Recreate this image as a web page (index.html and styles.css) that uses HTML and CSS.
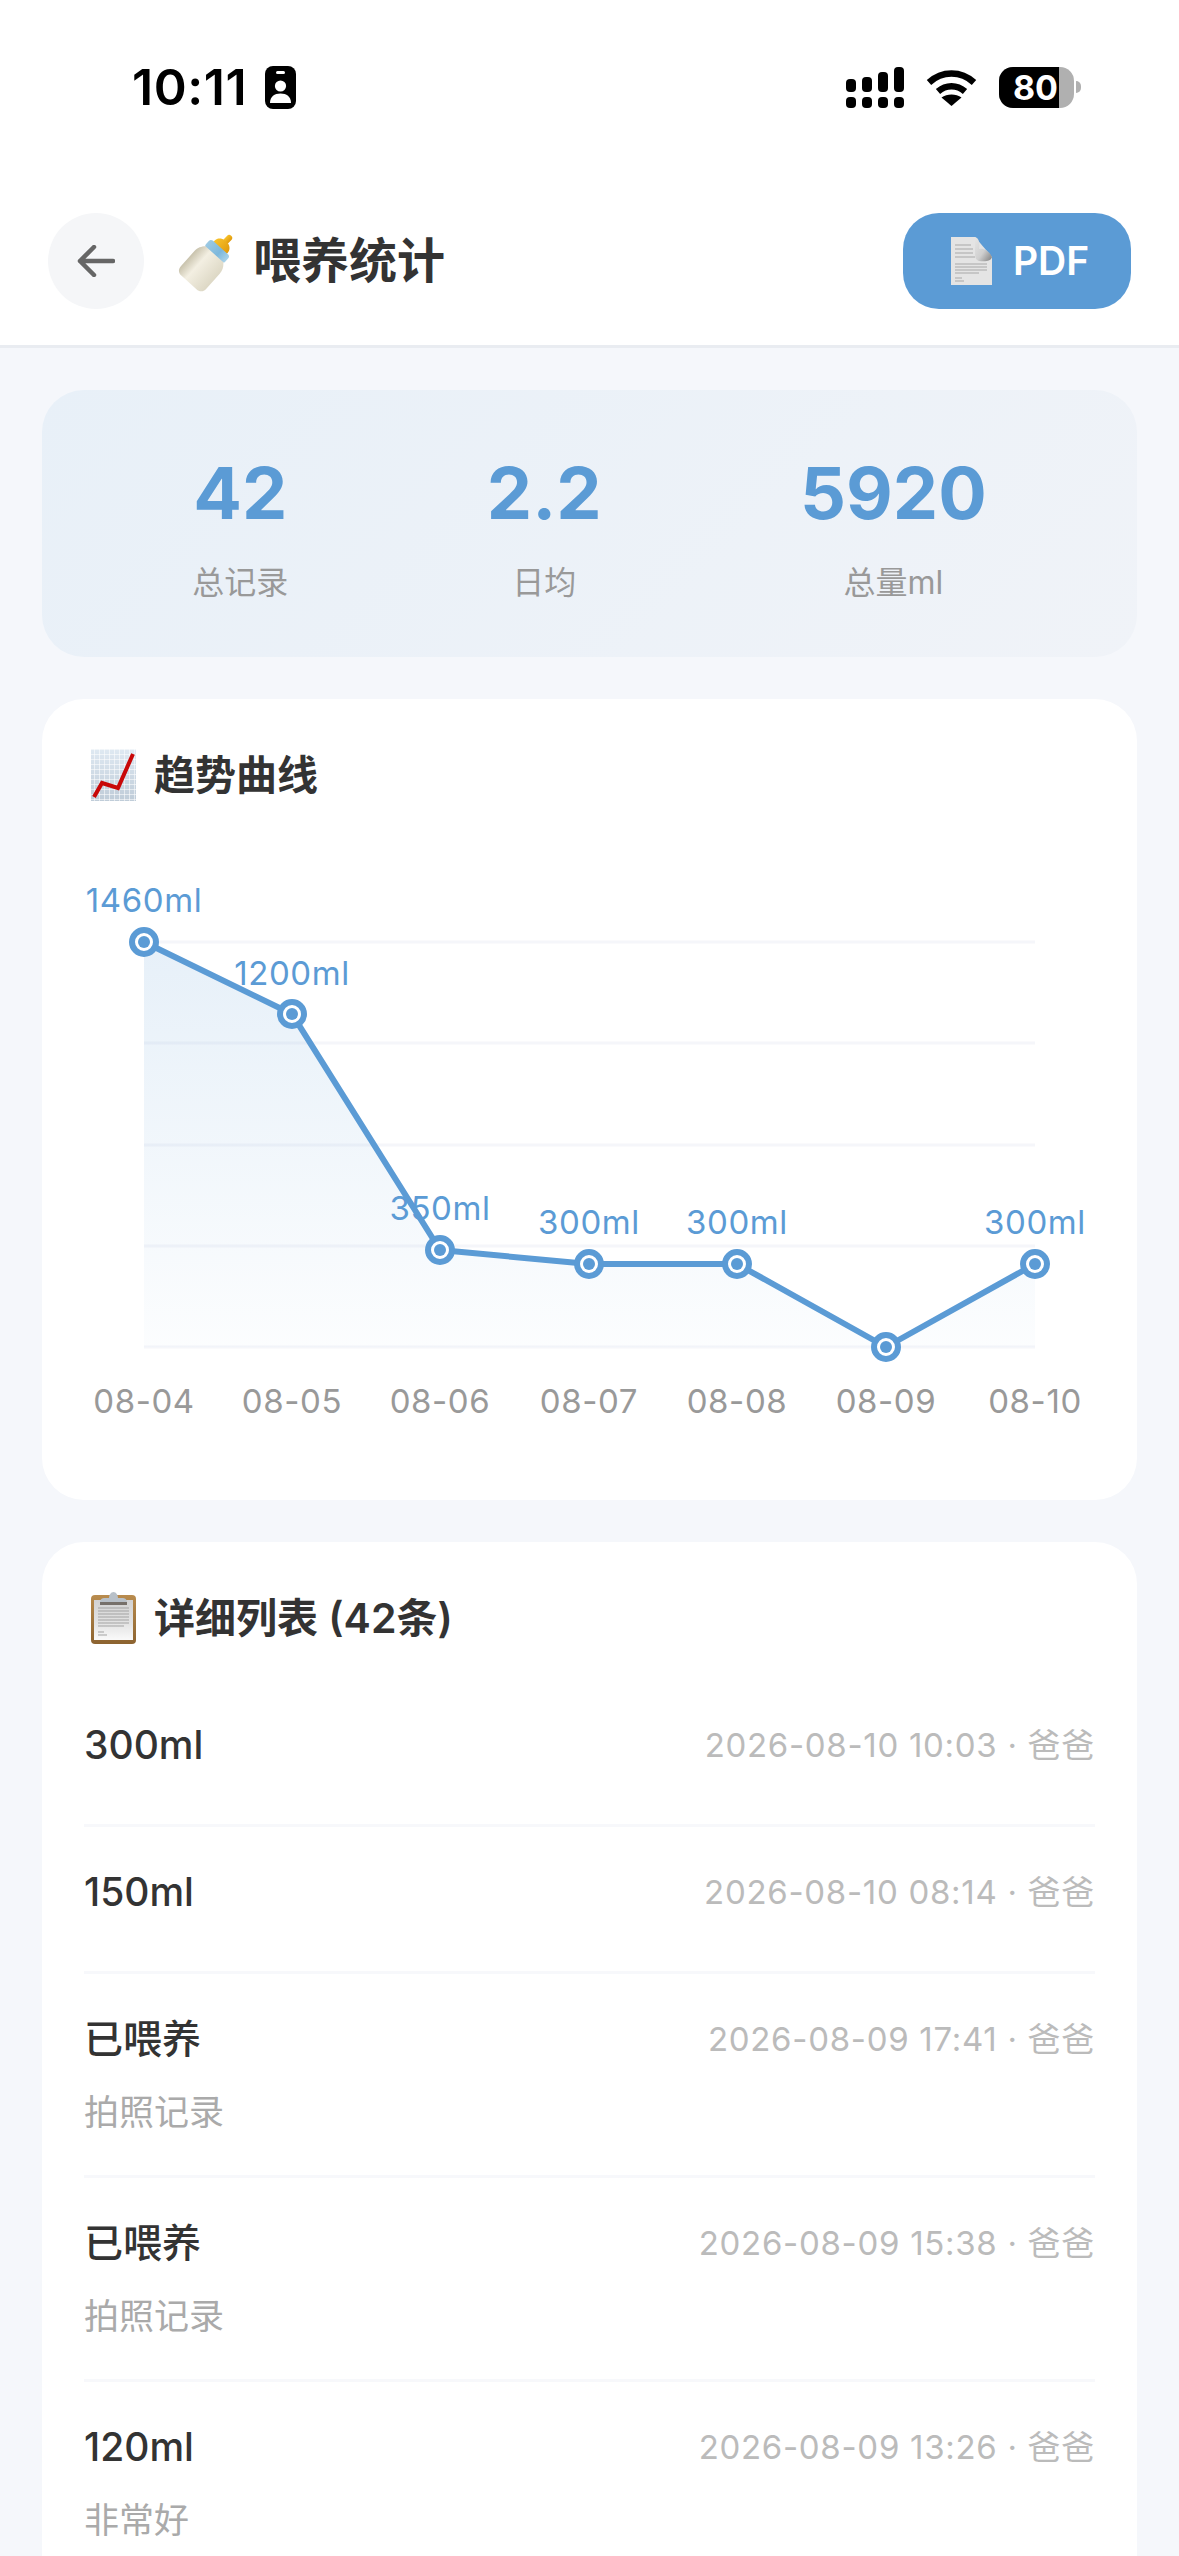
FILE: index.html
```html
<!DOCTYPE html>
<html lang="zh-CN">
<head>
<meta charset="utf-8">
<title>喂养统计</title>
<link rel="stylesheet" href="styles.css">
</head>
<body>
<header class="top">
  <div class="status">
    <div class="status-left">
      <span class="clock">10:11</span>
      <svg class="id-icon" viewBox="0 0 31 43"><rect width="31" height="43" rx="8" fill="#000"/><rect x="11" y="5" width="9" height="3" rx="1.5" fill="#fff"/><circle cx="15.5" cy="20" r="5.6" fill="#fff"/><path d="M5 37c0-6.5 4.5-9.5 10.500-9.500S26 30.500 26 37z" fill="#fff"/></svg>
    </div>
    <div class="status-right">
      <svg class="signal" viewBox="0 0 58 41"><g fill="#000"><rect x="0" y="12" width="10" height="13" rx="4"/><rect x="16" y="10" width="10" height="15" rx="4"/><rect x="32" y="5" width="10" height="20" rx="4"/><rect x="48" y="0" width="10" height="25" rx="4"/><rect x="0" y="30" width="10" height="11" rx="4"/><rect x="16" y="30" width="10" height="11" rx="4"/><rect x="32" y="30" width="10" height="11" rx="4"/><rect x="48" y="30" width="10" height="11" rx="4"/></g></svg>
      <svg class="wifi" viewBox="0 0 51 37"><path d="M3 13.500C16 1.500 35 1.500 48 13.500" fill="none" stroke="#000" stroke-width="6.500"/><path d="M12 22.500C20 15.500 31 15.500 39 22.500" fill="none" stroke="#000" stroke-width="6.500"/><path d="M25.500 37L15.500 28.500C21 24.500 30 24.500 35.500 28.500z" fill="#000"/></svg>
      <div class="battery">
        <div class="battery-body"><div class="battery-level">80</div></div>
        <div class="battery-nub"></div>
      </div>
    </div>
  </div>
  <nav class="nav">
    <div class="nav-left">
      <button class="back" type="button" aria-label="返回">
        <svg viewBox="0 0 38 32" class="back-icon"><path d="M36 16H3M17 2L3 16l14 14" fill="none" stroke="#666" stroke-width="4.500" stroke-linecap="round" stroke-linejoin="round"/></svg>
      </button>
      <svg class="bottle" viewBox="0 0 58 58">
        <defs>
          <linearGradient id="bo1" x1="0" y1="0" x2="1" y2="0"><stop offset="0" stop-color="#c8c2ac"/><stop offset=".35" stop-color="#f3efe2"/><stop offset="1" stop-color="#ddd8c5"/></linearGradient>
          <linearGradient id="bo2" x1="0" y1="0" x2="1" y2="0"><stop offset="0" stop-color="#9cc9e3"/><stop offset=".6" stop-color="#7db8dc"/><stop offset="1" stop-color="#a9d3ea"/></linearGradient>
          <linearGradient id="bo3" x1="0" y1="0" x2="1" y2="0"><stop offset="0" stop-color="#f8c22b"/><stop offset="1" stop-color="#e09a0c"/></linearGradient>
        </defs>
        <g transform="rotate(42 29 29)">
          <rect x="27" y="-6" width="6" height="10" rx="3" fill="url(#bo3)"/>
          <path d="M21 9c0-5 5-7 6-7h6c1 0 6 2 6 7v3H21z" fill="url(#bo3)"/>
          <rect x="17" y="10" width="26" height="10" rx="3" fill="url(#bo2)"/>
          <path d="M18 19h24c3 3 5 6 5 11v20c0 5-3 7-7 7H20c-4 0-7-2-7-7V30c0-5 2-8 5-11z" fill="url(#bo1)"/>
        </g>
      </svg>
      <h1 class="title">喂养统计</h1>
    </div>
    <button class="pdf" type="button">
      <svg class="doc" viewBox="0 0 41 48">
        <defs><linearGradient id="curl" x1="0" y1="0" x2="1" y2="1"><stop offset="0" stop-color="#e6e6e6"/><stop offset=".55" stop-color="#cfcfcf"/><stop offset="1" stop-color="#7d7d7d"/></linearGradient></defs>
        <path d="M0 0h24l17 20v28H0z" fill="#e4e4e4"/>
        <path d="M24 0c4 1 5 6 4 12 5-1 10 2 13 8-1 4-6 5-13 4-4-1-4-6-4-10z" fill="url(#curl)"/>
        <path d="M4 8h16M4 12h18M4 16h18M4 20h20M4 27h32M4 30h32M4 33h32M4 36h24M4 41h7M4 44h9" stroke="#a8a8a8" stroke-width="1" fill="none"/>
      </svg>
      <span>PDF</span>
    </button>
  </nav>
</header>

<main class="content">
  <section class="stats">
    <div class="stat"><div class="stat-num">42</div><div class="stat-label">总记录</div></div>
    <div class="stat"><div class="stat-num">2.2</div><div class="stat-label">日均</div></div>
    <div class="stat"><div class="stat-num">5920</div><div class="stat-label">总量ml</div></div>
  </section>

  <section class="card">
    <h2 class="card-title">
      <svg class="emoji" viewBox="0 0 58 52">
        <defs>
          <linearGradient id="cg" x1="0" y1="0" x2="0" y2="1"><stop offset="0" stop-color="#dfe9f2"/><stop offset="1" stop-color="#bfccd8"/></linearGradient>
          <pattern id="cp" width="5" height="5" patternUnits="userSpaceOnUse"><path d="M0 .5H5M.5 0V5" stroke="#fff" stroke-opacity=".55" stroke-width="1"/></pattern>
        </defs>
        <rect x="7" y="0" width="45" height="52" fill="url(#cg)"/>
        <rect x="7" y="0" width="45" height="52" fill="url(#cp)"/>
        <path d="M10 48L18 34 34 39 49 5" fill="none" stroke="#c80808" stroke-width="4"/>
      </svg>
      <span>趋势曲线</span>
    </h2>
    <svg class="chart" viewBox="84 860 1011 598">
      <defs><linearGradient id="area" x1="0" y1="0" x2="0" y2="1"><stop offset="0" stop-color="#5b9bd5" stop-opacity=".15"/><stop offset="1" stop-color="#5b9bd5" stop-opacity=".02"/></linearGradient></defs>
      <g class="grid">
        <line x1="144" x2="1035" y1="942" y2="942"/>
        <line x1="144" x2="1035" y1="1043" y2="1043"/>
        <line x1="144" x2="1035" y1="1145" y2="1145"/>
        <line x1="144" x2="1035" y1="1246" y2="1246"/>
        <line x1="144" x2="1035" y1="1347" y2="1347"/>
      </g>
      <polygon points="144,942 292,1014 440,1250 589,1264 737,1264 886,1347 1035,1264 1035,1347 144,1347" fill="url(#area)"/>
      <polyline class="trend" points="144,942 292,1014 440,1250 589,1264 737,1264 886,1347 1035,1264"/>
      <g class="pt-ring">
        <circle cx="144" cy="942" r="12"/><circle cx="292" cy="1014" r="12"/><circle cx="440" cy="1250" r="12"/><circle cx="589" cy="1264" r="12"/><circle cx="737" cy="1264" r="12"/><circle cx="886" cy="1347" r="12"/><circle cx="1035" cy="1264" r="12"/>
      </g>
      <g class="pt-dot">
        <circle cx="144" cy="942" r="6"/><circle cx="292" cy="1014" r="6"/><circle cx="440" cy="1250" r="6"/><circle cx="589" cy="1264" r="6"/><circle cx="737" cy="1264" r="6"/><circle cx="886" cy="1347" r="6"/><circle cx="1035" cy="1264" r="6"/>
      </g>
      <g class="val">
        <text x="144" y="912">1460ml</text>
        <text x="292" y="985">1200ml</text>
        <text x="440" y="1220">350ml</text>
        <text x="589" y="1234">300ml</text>
        <text x="737" y="1234">300ml</text>
        <text x="1035" y="1234">300ml</text>
      </g>
      <g class="axis">
        <text x="144" y="1413">08-04</text>
        <text x="292" y="1413">08-05</text>
        <text x="440" y="1413">08-06</text>
        <text x="589" y="1413">08-07</text>
        <text x="737" y="1413">08-08</text>
        <text x="886" y="1413">08-09</text>
        <text x="1035" y="1413">08-10</text>
      </g>
    </svg>
  </section>

  <section class="card">
    <h2 class="card-title list-title">
      <svg class="emoji" viewBox="0 0 58 52">
        <defs>
          <linearGradient id="pg" x1="0" y1="0" x2="0" y2="1"><stop offset="0" stop-color="#d2d2d2"/><stop offset=".6" stop-color="#e4e4e4"/><stop offset="1" stop-color="#fafafa"/></linearGradient>
          <linearGradient id="bg" x1="0" y1="0" x2="0" y2="1"><stop offset="0" stop-color="#b98c4e"/><stop offset="1" stop-color="#8c6330"/></linearGradient>
        </defs>
        <rect x="7" y="3" width="45" height="49" rx="4" fill="url(#bg)"/>
        <rect x="10" y="8" width="39" height="40" fill="url(#pg)"/>
        <path d="M14 16h31M14 19h31M14 22h31M14 25h31M14 28h31M14 31h31M14 34h26M14 40h6M14 43h9" stroke="#a3a3a3" stroke-width="1" fill="none"/>
        <path d="M16 11c0-4 2-5 5-5h4c0-3 2-6 4.500-6s4.500 3 4.500 6h4c3 0 5 1 5 5v1H16z" fill="#b8c0c8"/>
        <rect x="16" y="10" width="27" height="3" fill="#76706a"/>
      </svg>
      <span>详细列表 (42条)</span>
    </h2>
    <div class="rows">
      <article class="row">
        <div class="row-main"><span class="row-name">300ml</span><span class="row-meta">2026-08-10 10:03 · 爸爸</span></div>
      </article>
      <article class="row">
        <div class="row-main"><span class="row-name">150ml</span><span class="row-meta">2026-08-10 08:14 · 爸爸</span></div>
      </article>
      <article class="row">
        <div class="row-main"><span class="row-name">已喂养</span><span class="row-meta">2026-08-09 17:41 · 爸爸</span></div>
        <div class="row-sub">拍照记录</div>
      </article>
      <article class="row">
        <div class="row-main"><span class="row-name">已喂养</span><span class="row-meta">2026-08-09 15:38 · 爸爸</span></div>
        <div class="row-sub">拍照记录</div>
      </article>
      <article class="row">
        <div class="row-main"><span class="row-name">120ml</span><span class="row-meta">2026-08-09 13:26 · 爸爸</span></div>
        <div class="row-sub">非常好</div>
      </article>
    </div>
  </section>
</main>
</body>
</html>
```

FILE: styles.css
```css
* { box-sizing: border-box; }
html, body { margin: 0; padding: 0; height: 2556px; overflow: hidden; }
body {
  background: #f5f7fb;
  font-family: Inter, "Noto Sans CJK SC", sans-serif;
  color: #333;
}
.top { background: #fff; border-bottom: 3px solid #e9ecf1; }
.status {
  height: 177px;
  padding: 66px 98px 0 132px;
  display: flex;
  justify-content: space-between;
  align-items: flex-start;
}
.status-left { display: flex; align-items: center; gap: 18px; }
.clock { font-size: 50px; font-weight: 600; line-height: 43px; color: #000; letter-spacing: .6px; }
.id-icon { width: 31px; height: 43px; display: block; }
.status-right { display: flex; align-items: flex-start; }
.signal { width: 58px; height: 41px; display: block; margin-top: 1px; }
.wifi { width: 51px; height: 37px; display: block; margin: 3px 22px 0 22px; }
.battery { display: flex; align-items: center; }
.battery-body {
  width: 75px; height: 41px; margin-top: 1px;
  border-radius: 14px;
  background: #b0b0b0;
}
.battery-level {
  width: 60px; height: 41px; padding-right: 1px;
  border-radius: 14px 0 0 14px;
  background: #000; color: #fff;
  font-size: 34px; font-weight: 700; line-height: 41px;
  text-align: right;
}
.battery-nub { width: 5px; height: 12px; margin-left: 2px; background: #b0b0b0; border-radius: 0 6px 6px 0; }

.nav {
  height: 168px;
  padding: 36px 48px 0;
  display: flex;
  justify-content: space-between;
  align-items: flex-start;
}
.nav-left { display: flex; align-items: center; height: 96px; }
.back {
  width: 96px; height: 96px; padding: 0; border: 0;
  border-radius: 50%; background: #f5f6f8;
  display: flex; align-items: center; justify-content: center;
}
.back-icon { width: 38px; height: 32px; display: block; }
.bottle { width: 58px; height: 58px; margin-left: 34px; display: block; overflow: visible; }
.title { margin: 0 0 0 17px; font-size: 48px; font-weight: 700; line-height: 60px; color: #333; }
.pdf {
  width: 228px; height: 96px; padding: 0 0 0 6px; border: 0;
  border-radius: 36px; background: #5b9bd5; color: #fff;
  font: 600 39px/48px Inter, "Noto Sans CJK SC", sans-serif;
  display: flex; align-items: center; justify-content: center; gap: 21px;
}
.doc { width: 41px; height: 48px; display: block; }

.content { padding: 42px; display: flex; flex-direction: column; gap: 42px; }
.stats {
  height: 267px;
  padding: 54px 51px;
  border-radius: 42px;
  background: linear-gradient(135deg, #e8f0f8, #f0f3f8);
  display: flex;
  justify-content: space-around;
}
.stat { text-align: center; }
.stat-num { font-size: 72px; font-weight: 700; line-height: 98px; color: #5b9bd5; }
.stat-label { margin-top: 21px; font-size: 32px; line-height: 40px; color: #999; }

.card { background: #fff; border-radius: 42px; padding: 42px; }
.card-title {
  margin: 0 0 51px;
  height: 68px;
  display: flex; align-items: center; gap: 12px;
  font-size: 41px; font-weight: 600; line-height: 68px; color: #333;
}
.list-title { margin-bottom: 28px; }
.emoji { width: 58px; height: 52px; display: block; flex: none; }
.chart { display: block; width: 1011px; height: 598px; }
.grid line { stroke: #f5f6fa; stroke-width: 3; }
.trend { fill: none; stroke: #5b9bd5; stroke-width: 6; stroke-linejoin: round; }
.pt-ring circle { fill: #fff; stroke: #5b9bd5; stroke-width: 6; }
.pt-dot circle { fill: #5b9bd5; }
.val text { font-size: 33px; letter-spacing: .6px; fill: #5b9bd5; text-anchor: middle; }
.axis text { font-size: 33px; letter-spacing: .6px; fill: #999; text-anchor: middle; }

.row { padding: 29px 0 43px; border-bottom: 3px solid #f7f8fb; }
.row-main { display: flex; justify-content: space-between; align-items: center; height: 72px; }
.row-name { font-size: 39px; font-weight: 500; color: #333; line-height: 60px; }
.row-meta { font-size: 33px; letter-spacing: .7px; color: #bbb; line-height: 60px; }
.row-sub { margin-top: 17px; font-size: 35px; line-height: 40px; color: #aaa; }
```
